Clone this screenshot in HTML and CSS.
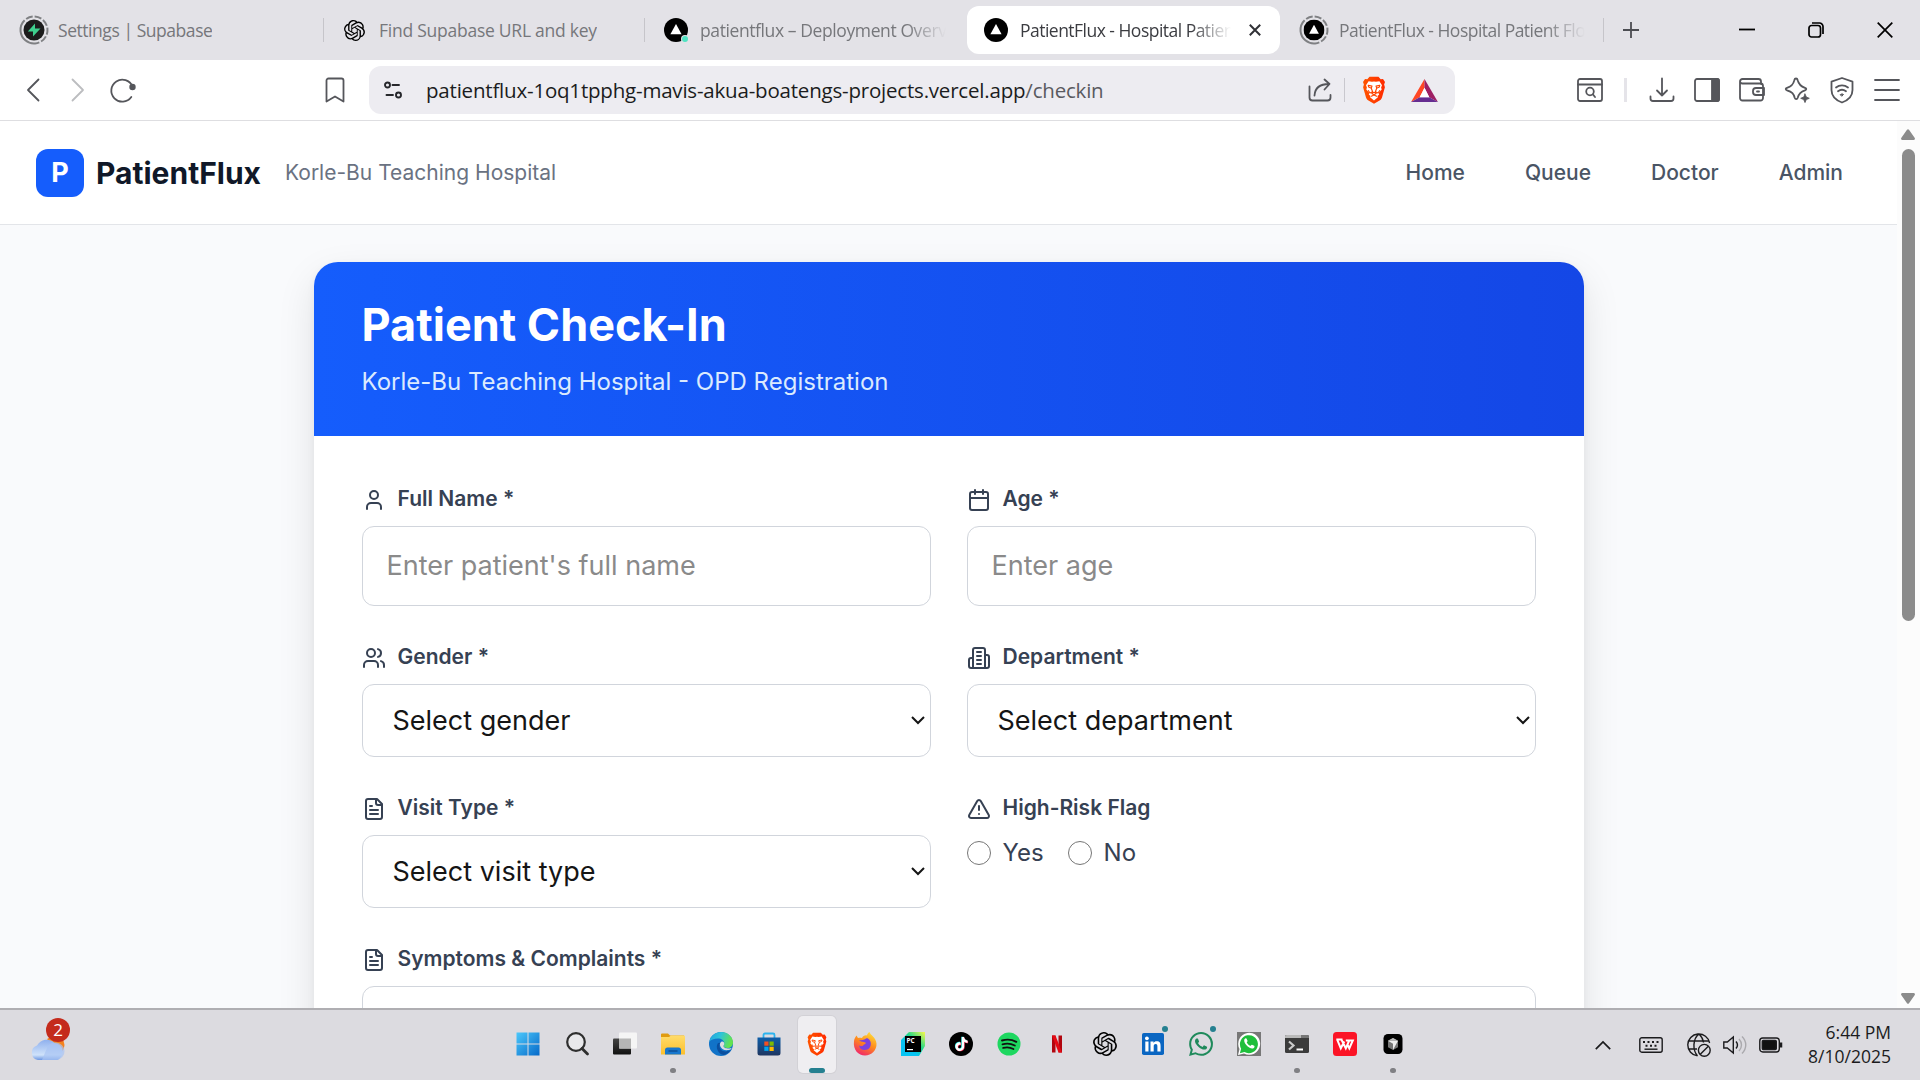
FILE: index.html
```html
<!DOCTYPE html>
<html lang="en">
<head>
<meta charset="utf-8">
<title>PatientFlux - Hospital Patient Flow</title>
<link rel="stylesheet" href="styles.css">
</head>
<body>
<svg class="defs" width="0" height="0">
  <defs>
    <linearGradient id="g-brave" x1="0" y1="0" x2="1" y2="0"><stop offset="0" stop-color="#ff5500"/><stop offset="1" stop-color="#ff2a00"/></linearGradient>
    <linearGradient id="g-win" x1="0" y1="0" x2="1" y2="1"><stop offset="0" stop-color="#4cc8fb"/><stop offset="1" stop-color="#0669c9"/></linearGradient>
    <linearGradient id="g-folder" x1="0" y1="0" x2="0" y2="1"><stop offset="0" stop-color="#ffdc6b"/><stop offset="1" stop-color="#fcbf2c"/></linearGradient>
    <linearGradient id="g-edge" x1="0" y1="0" x2="1" y2="0.3"><stop offset="0" stop-color="#1e9fe0"/><stop offset="0.5" stop-color="#2fc4d8"/><stop offset="1" stop-color="#63e250"/></linearGradient>
    <linearGradient id="g-store" x1="0" y1="0" x2="0" y2="1"><stop offset="0" stop-color="#0d5ea9"/><stop offset="1" stop-color="#1f3560"/></linearGradient>
    <linearGradient id="g-fox" x1="0.8" y1="0" x2="0.3" y2="1"><stop offset="0" stop-color="#ffe13a"/><stop offset="0.5" stop-color="#ff8a1c"/><stop offset="1" stop-color="#f0246e"/></linearGradient>
    <linearGradient id="g-pc" x1="0" y1="1" x2="1" y2="0"><stop offset="0.35" stop-color="#07c3f2"/><stop offset="0.6" stop-color="#21d789"/><stop offset="1" stop-color="#fcf84a"/></linearGradient>
    <linearGradient id="g-cloud" x1="0" y1="0" x2="0" y2="1"><stop offset="0" stop-color="#8fb0ee"/><stop offset="0.75" stop-color="#cfe2fa"/><stop offset="1" stop-color="#6d97e2"/></linearGradient>
    <linearGradient id="g-task" x1="0" y1="0" x2="0" y2="1"><stop offset="0" stop-color="#444"/><stop offset="1" stop-color="#111"/></linearGradient>
  </defs>
  <symbol id="i-gpt" viewBox="0 0 24 24"><path d="M22.2819 9.8211a5.9847 5.9847 0 0 0-.5157-4.9108 6.0462 6.0462 0 0 0-6.5098-2.9A6.0651 6.0651 0 0 0 4.9807 4.1818a5.9847 5.9847 0 0 0-3.9977 2.9 6.0462 6.0462 0 0 0 .7427 7.0966 5.98 5.98 0 0 0 .511 4.9107 6.051 6.051 0 0 0 6.5146 2.9001A5.9847 5.9847 0 0 0 13.2599 24a6.0557 6.0557 0 0 0 5.7718-4.2058 5.9894 5.9894 0 0 0 3.9977-2.9001 6.0557 6.0557 0 0 0-.7475-7.0729zm-9.022 12.6081a4.4755 4.4755 0 0 1-2.8764-1.0408l.1419-.0804 4.7783-2.7582a.7948.7948 0 0 0 .3927-.6813v-6.7369l2.02 1.1686a.071.071 0 0 1 .038.052v5.5826a4.504 4.504 0 0 1-4.4945 4.4944zm-9.6607-4.1254a4.4708 4.4708 0 0 1-.5346-3.0137l.142.0852 4.783 2.7582a.7712.7712 0 0 0 .7806 0l5.8428-3.3685v2.3324a.0804.0804 0 0 1-.0332.0615L9.74 19.9502a4.4992 4.4992 0 0 1-6.1408-1.6464zM2.3408 7.8956a4.485 4.485 0 0 1 2.3655-1.9728V11.6a.7664.7664 0 0 0 .3879.6765l5.8144 3.3543-2.0201 1.1685a.0757.0757 0 0 1-.071 0l-4.8303-2.7865A4.504 4.504 0 0 1 2.3408 7.872zm16.5963 3.8558L13.1038 8.364 15.1192 7.2a.0757.0757 0 0 1 .071 0l4.8303 2.7913a4.4944 4.4944 0 0 1-.6765 8.1042v-5.6772a.79.79 0 0 0-.407-.667zm2.0107-3.0231l-.142-.0852-4.7735-2.7818a.7759.7759 0 0 0-.7854 0L9.409 9.2297V6.8974a.0662.0662 0 0 1 .0284-.0615l4.8303-2.7866a4.4992 4.4992 0 0 1 6.6802 4.66zM8.3065 12.863l-2.02-1.1638a.0804.0804 0 0 1-.038-.0567V6.0742a4.4992 4.4992 0 0 1 7.3757-3.4537l-.142.0805L8.704 5.459a.7948.7948 0 0 0-.3927.6813zm1.0976-2.3654l2.602-1.4998 2.6069 1.4998v2.9994l-2.5974 1.4997-2.6067-1.4997Z"/></symbol>
  <symbol id="i-vercel" viewBox="0 0 24 24"><circle cx="12" cy="12" r="12" fill="#000"/><path d="M12 6l5.6 10.2H6.400z" fill="#fff"/></symbol>
  <symbol id="i-brave" viewBox="0 0 24 28"><path d="M7.500.8h9l2.200 2.500 2.300-.4 2 3.200-.9 2.300.8 2.800-2.900 10.300c-.4 1.300-1 2-2 2.700l-6 3.600-6-3.600c-1-.7-1.600-1.400-2-2.700L1.100 11.200l.8-2.800L1 6.100l2-3.200 2.300.4z" fill="url(#g-brave)"/><path d="M12 5.400l2 .4 3.400-.6 2.600 4-.9 2.300.6 2-3.100 3.400.6 1.700-1.700 1.400 .4 1.300L12 24.400 8.100 21.300l.4-1.300-1.700-1.400.6-1.700L4.300 13.500l.6-2L4 9.200l2.600-4 3.400.6z" fill="#fff"/><path d="M6.200 9.300l3.800.8-.7 2.100L6.700 11zM17.800 9.300l-3.800.8.7 2.100 2.600-1.200zM9.300 12.200l1.300 3.500L8 17l-1.700-2.400M14.700 12.200l-1.300 3.500L16 17l1.700-2.400M12 16.200l2.200 1.300-2.200 1.400-2.200-1.400zM9.300 20.300L12 18.900l2.700 1.400" fill="none" stroke="#ff4500" stroke-width="1.100"/></symbol>
  <symbol id="i-file" viewBox="0 0 24 24"><path d="M15 2H6a2 2 0 0 0-2 2v16a2 2 0 0 0 2 2h12a2 2 0 0 0 2-2V7Z"/><path d="M14 2v4a2 2 0 0 0 2 2h4M10 9H8M16 13H8M16 17H8"/></symbol>
  <symbol id="i-wa" viewBox="0 0 24 24"><path d="M17.472 14.382c-.297-.149-1.758-.867-2.03-.967-.273-.099-.471-.148-.67.15-.197.297-.767.966-.94 1.164-.173.199-.347.223-.644.075-.297-.15-1.255-.463-2.39-1.475-.883-.788-1.480-1.761-1.653-2.059-.173-.297-.018-.458.13-.606.134-.133.298-.347.446-.52.149-.174.198-.298.298-.497.099-.198.05-.371-.025-.52-.075-.149-.669-1.612-.916-2.207-.242-.579-.487-.5-.669-.51-.173-.008-.371-.01-.57-.01-.198 0-.52.074-.792.372-.272.297-1.040 1.016-1.040 2.479 0 1.462 1.065 2.875 1.213 3.074.149.198 2.096 3.200 5.077 4.487.709.306 1.262.489 1.694.625.712.227 1.360.195 1.871.118.571-.085 1.758-.719 2.006-1.413.248-.694.248-1.289.173-1.413-.074-.124-.272-.198-.57-.347m-5.421 7.403h-.004a9.870 9.870 0 0 1-5.031-1.378l-.361-.214-3.741.982.998-3.648-.235-.374a9.860 9.860 0 0 1-1.510-5.260c.001-5.450 4.436-9.884 9.888-9.884 2.640 0 5.122 1.030 6.988 2.898a9.825 9.825 0 0 1 2.893 6.994c-.003 5.450-4.437 9.884-9.885 9.884m8.413-18.297A11.815 11.815 0 0 0 12.050 0C5.495 0 .16 5.335.157 11.892c0 2.096.547 4.142 1.588 5.945L.057 24l6.305-1.654a11.882 11.882 0 0 0 5.683 1.448h.005c6.554 0 11.890-5.335 11.893-11.893a11.821 11.821 0 0 0-3.480-8.413z"/></symbol>
  <symbol id="i-tok" viewBox="0 0 24 24"><path d="M12.525.02c1.310-.02 2.610-.01 3.910-.02.08 1.530.63 3.090 1.750 4.170 1.120 1.110 2.700 1.620 4.240 1.790v4.030c-1.440-.05-2.890-.35-4.200-.97-.57-.26-1.100-.59-1.620-.93-.01 2.920.01 5.840-.02 8.750-.08 1.400-.54 2.790-1.350 3.940-1.310 1.920-3.580 3.170-5.910 3.210-1.430.08-2.860-.31-4.080-1.030-2.020-1.190-3.440-3.370-3.650-5.710-.02-.5-.03-1-.01-1.490.18-1.900 1.120-3.720 2.580-4.960 1.660-1.440 3.980-2.130 6.150-1.720.02 1.480-.04 2.960-.04 4.440-.99-.32-2.150-.23-3.020.37-.63.41-1.110 1.040-1.360 1.750-.21.51-.15 1.070-.14 1.610.24 1.640 1.820 3.020 3.500 2.870 1.120-.01 2.190-.66 2.770-1.610.19-.33.4-.67.41-1.060.1-1.790.06-3.570.07-5.360.01-4.030-.01-8.050.02-12.070z"/></symbol>
</svg>

<div class="tabs">
  <div class="tab tab-1">
    <svg class="fav-lg" viewBox="0 0 30 30"><circle cx="15" cy="15" r="13.500" fill="none" stroke="#7f8083" stroke-width="2" stroke-dasharray="33 2 7 2 7 2 7 2 7 2 7 2" transform="rotate(85 15 15)"/><circle cx="15" cy="15" r="10.500" fill="#1c1c1c"/><path d="M16 8.500v5h5.500L14 21.500v-5H8.800z" fill="#3ecf8e"/></svg>
    <span class="tab-t t1">Settings | Supabase</span>
  </div>
  <i class="tab-div"></i>
  <div class="tab tab-2">
    <svg class="fav-sm"><use href="#i-gpt"/></svg>
    <span class="tab-t t2">Find Supabase URL and key</span>
  </div>
  <i class="tab-div"></i>
  <div class="tab tab-3">
    <svg class="fav" viewBox="0 0 24 24"><use href="#i-vercel"/><circle cx="21" cy="21" r="4" fill="#e3e2e7"/><circle cx="21" cy="21" r="3" fill="#50e3c2"/></svg>
    <span class="tab-t t3 fade">patientflux – Deployment Overview</span>
  </div>
  <div class="tab tab-4">
    <svg class="fav"><use href="#i-vercel"/></svg>
    <span class="tab-t t4 fade">PatientFlux - Hospital Patient Flow</span>
    <svg class="close" viewBox="0 0 12 12"><path d="M.8.8l10.400 10.400M11.200.8L.8 11.200" stroke="#303136" stroke-width="2"/></svg>
  </div>
  <div class="tab tab-5">
    <svg class="fav-lg" viewBox="0 0 30 30"><circle cx="15" cy="15" r="13.500" fill="none" stroke="#7f8083" stroke-width="2" stroke-dasharray="33 2 7 2 7 2 7 2 7 2 7 2" transform="rotate(85 15 15)"/><use href="#i-vercel" x="4.500" y="4.500" width="21" height="21"/></svg>
    <span class="tab-t t5 fade">PatientFlux - Hospital Patient Flow</span>
  </div>
  <i class="tab-div"></i>
  <svg class="plus" viewBox="0 0 16 16"><path d="M8 0v16M0 8h16" stroke="#4c4d52" stroke-width="1.800"/></svg>
  <div class="win">
    <svg viewBox="0 0 16 16"><path d="M0 7.500h16" stroke="#000" stroke-width="1.800"/></svg>
    <svg viewBox="0 0 16 16"><rect x="1" y="3.500" width="11.500" height="11.500" rx="2.500" fill="none" stroke="#000" stroke-width="1.700"/><path d="M4 1h7.500A3.500 3.500 0 0 1 15 4.500V12" fill="none" stroke="#000" stroke-width="1.700"/></svg>
    <svg viewBox="0 0 16 16"><path d="M.7.700l14.600 14.600M15.300.7L.7 15.300" stroke="#000" stroke-width="1.700"/></svg>
  </div>
</div>

<div class="toolbar">
  <div class="nav-btns">
    <svg viewBox="0 0 24 24"><path d="M17.500 1.500L7 12l10.500 10.500"/></svg>
    <svg class="dim" viewBox="0 0 24 24"><path d="M6.500 1.500L17 12 6.500 22.500"/></svg>
    <svg viewBox="0 0 24 24"><path d="M21.500 8.500A11 11 0 1 0 20.300 19"/><circle cx="21.500" cy="9" r="2.300" fill="#55565b"/></svg>
  </div>
  <svg class="bookmark" viewBox="0 0 20 26"><path d="M1.500 24.500V3.500a2 2 0 0 1 2-2h13a2 2 0 0 1 2 2v21L10 19.500z"/></svg>
  <div class="omni">
    <svg class="site" viewBox="0 0 18 18"><g fill="none" stroke="#26272b" stroke-width="1.900" stroke-linecap="round"><circle cx="3.500" cy="4" r="2.500"/><path d="M8.500 4H15M2.500 14H9"/><circle cx="14.500" cy="14" r="2.500"/></g></svg>
    <span class="url">patientflux-1oq1tpphg-mavis-akua-boatengs-projects.vercel.app<em>/checkin</em></span>
    <svg class="share" viewBox="0 0 24 24"><path d="M1.500 8.500v11a3 3 0 0 0 3 3h15a3 3 0 0 0 3-3v-2.500M6.500 17.500C7 9.500 13 6 21 6M16.500 1.500L21.500 6l-5 5.500"/></svg>
    <i class="omni-div"></i>
    <svg class="lion"><use href="#i-brave"/></svg>
    <svg class="bat" viewBox="0 0 28 24"><path d="M14 0L0 24l9-5 5-10z" fill="#ff4724"/><path d="M14 0l14 24-9-5-5-10z" fill="#9e1f63"/><path d="M0 24h28l-9-5H9z" fill="#662d91"/><path d="M14 9l5 10H9z" fill="#fff"/></svg>
  </div>
  <div class="actions">
    <svg viewBox="0 0 26 26"><rect x="1" y="2" width="24" height="22" rx="2"/><path d="M1 7.500h24"/><circle cx="13" cy="14.500" r="3.800"/><path d="M16 17.500l2 2.500"/></svg>
    <i class="act-div"></i>
    <svg viewBox="0 0 26 26"><path d="M13 1.500v17M8 13.500l5 5 5-5M1.500 19.500v2a2.500 2.500 0 0 0 2.500 2.500h18a2.500 2.500 0 0 0 2.500-2.500v-2"/></svg>
    <svg viewBox="0 0 26 26"><rect x="1" y="2" width="24" height="22" rx="2"/><path d="M18 2h5a2 2 0 0 1 2 2v18a2 2 0 0 1-2 2h-5z" fill="#55565b"/></svg>
    <svg viewBox="0 0 26 26"><path d="M22 7V4.500A2.500 2.500 0 0 0 19.500 2h-16A2.500 2.500 0 0 0 1 4.500V21a2.500 2.500 0 0 0 2.500 2.500h18A2.500 2.500 0 0 0 24 21V9a2.500 2.500 0 0 0-2.500-2.500H3.500a2.500 2.500 0 0 1-2.500-2M25 11h-8a3 3 0 0 0-3 3v1a3 3 0 0 0 3 3h8zM18 14.500h2"/></svg>
    <svg viewBox="0 0 26 26"><path d="M12 1.500c1 0 1.500.8 1.700 1.700 1 4 2.500 6 7.300 7.600 1.700.6 1.700 2 0 2.500-4.800 1.500-6.300 3.400-7.300 7.500-.5 1.800-2.400 1.800-3 0-1-4.100-2.500-6-7.700-7.500-1.700-.5-1.700-1.900 0-2.500 5-1.500 6.300-3.600 7.300-7.600.2-.9.700-1.700 1.700-1.700z"/><path d="M21 17l1.300 3 3 1.300-3 1.300-1.300 3-1.300-3-3-1.300 3-1.300z" fill="#55565b" stroke-width=".8"/></svg>
    <svg viewBox="0 0 26 26"><path d="M13 1l10.500 3.700v8.300c0 6.500-4.500 10.300-10.500 12.500C7 23.300 2.500 19.500 2.500 13V4.700z"/><path d="M7 10.500c3.500-2.800 8.500-2.800 12 0M9 14.300c2.500-2 5.500-2 8 0"/><path d="M11.500 17.500c1-.8 2-.8 3 0L13 19z" fill="#55565b" stroke-width="1"/></svg>
    <svg viewBox="0 0 26 26"><path d="M1 3h24M1 13h24M1 23h24"/></svg>
  </div>
</div>

<div class="viewport">
  <div class="page">
    <header class="site-head">
      <span class="logo">P</span>
      <span class="brand">PatientFlux</span>
      <span class="hospital">Korle-Bu Teaching Hospital</span>
      <nav><a>Home</a><a>Queue</a><a>Doctor</a><a>Admin</a></nav>
    </header>
    <main class="card">
      <div class="card-head">
        <h1>Patient Check-In</h1>
        <p>Korle-Bu Teaching Hospital - OPD Registration</p>
      </div>
      <form class="form">
        <div class="field">
          <div class="label"><svg viewBox="0 0 24 24"><path d="M19 21v-2a4 4 0 0 0-4-4H9a4 4 0 0 0-4 4v2"/><circle cx="12" cy="7" r="4"/></svg><span>Full Name *</span></div>
          <div class="box input">Enter patient's full name</div>
        </div>
        <div class="field">
          <div class="label"><svg viewBox="0 0 24 24"><path d="M8 2v4M16 2v4M3 10h18"/><rect x="3" y="4" width="18" height="18" rx="2"/></svg><span>Age *</span></div>
          <div class="box input">Enter age</div>
        </div>
        <div class="field">
          <div class="label"><svg viewBox="0 0 24 24"><path d="M16 21v-2a4 4 0 0 0-4-4H6a4 4 0 0 0-4 4v2"/><circle cx="9" cy="7" r="4"/><path d="M22 21v-2a4 4 0 0 0-3-3.870M16 3.130a4 4 0 0 1 0 7.750"/></svg><span>Gender *</span></div>
          <div class="box select"><span>Select gender</span><svg viewBox="0 0 14 9"><path d="M1 1l6 6 6-6"/></svg></div>
        </div>
        <div class="field">
          <div class="label"><svg viewBox="0 0 24 24"><path d="M6 22V4a2 2 0 0 1 2-2h8a2 2 0 0 1 2 2v18ZM6 12H4a2 2 0 0 0-2 2v6a2 2 0 0 0 2 2h2M18 9h2a2 2 0 0 1 2 2v9a2 2 0 0 1-2 2h-2M10 6h4M10 10h4M10 14h4M10 18h4"/></svg><span>Department *</span></div>
          <div class="box select"><span>Select department</span><svg viewBox="0 0 14 9"><path d="M1 1l6 6 6-6"/></svg></div>
        </div>
        <div class="field">
          <div class="label"><svg><use href="#i-file"/></svg><span>Visit Type *</span></div>
          <div class="box select"><span>Select visit type</span><svg viewBox="0 0 14 9"><path d="M1 1l6 6 6-6"/></svg></div>
        </div>
        <div class="field">
          <div class="label"><svg viewBox="0 0 24 24"><path d="m21.730 18-8-14a2 2 0 0 0-3.480 0l-8 14A2 2 0 0 0 4 21h16a2 2 0 0 0 1.730-3M12 9v4M12 17h.01"/></svg><span>High-Risk Flag</span></div>
          <div class="radios"><i class="radio"></i><span>Yes</span><i class="radio second"></i><span>No</span></div>
        </div>
        <div class="field wide">
          <div class="label"><svg><use href="#i-file"/></svg><span>Symptoms &amp; Complaints *</span></div>
          <div class="box area"></div>
        </div>
      </form>
    </main>
  </div>
  <div class="scroll">
    <svg viewBox="0 0 14 11"><path d="M6 .8a1.300 1.300 0 0 1 2 0l5.600 8A1.300 1.300 0 0 1 12.600 11H1.400a1.300 1.300 0 0 1-1-2.200z"/></svg>
    <i class="thumb"></i>
    <svg class="down" viewBox="0 0 14 11"><path d="M6 10.200a1.300 1.300 0 0 0 2 0l5.600-8A1.300 1.300 0 0 0 12.600 0H1.400a1.300 1.300 0 0 0-1 2.200z"/></svg>
  </div>
</div>

<div class="taskbar">
  <div class="weather">
    <svg viewBox="0 0 36 25"><circle cx="25" cy="9" r="9.500" fill="#f4821f"/><path d="M8 24a7.500 7.500 0 0 1-1-14.500A11 11 0 0 1 24.500 7 8.800 8.800 0 0 1 27 24z" fill="url(#g-cloud)"/><path d="M17 12a9 9 0 0 1 9-5.500A8.800 8.800 0 0 1 27 24H12z" fill="#a9c5f3" opacity=".7"/></svg>
    <b class="badge">2</b>
  </div>
  <div class="apps">
    <div class="app"><svg class="start" viewBox="0 0 24 24"><path d="M.5.5h11v11H.5zM12.500.5h11v11h-11zM.5 12.500h11v11H.5zM12.500 12.500h11v11h-11z" fill="url(#g-win)"/></svg></div>
    <div class="app"><svg viewBox="0 0 24 24"><circle cx="11" cy="10" r="8.800" fill="#e8e8eb" stroke="#2e2e2e" stroke-width="2.200"/><path d="M17 16.500l5.500 5.500" stroke="#2e2e2e" stroke-width="2.800" stroke-linecap="round"/></svg></div>
    <div class="app"><svg viewBox="0 0 24 24"><rect x="0" y="6.500" width="18" height="16" rx="1" fill="url(#g-task)"/><rect x="6" y=".5" width="18" height="16" rx="1" fill="#f5f5f5"/><path d="M6 6.500h12v10H6z" fill="#b5b5b5"/></svg></div>
    <div class="app"><svg viewBox="0 0 24 24"><path d="M0 2.500a1 1 0 0 1 1-1h6l2 2h14v4H0z" fill="#e09b10"/><path d="M0 5h8l2-1.500h13a1 1 0 0 1 1 1v18H0z" fill="url(#g-folder)"/><path d="M4 22.500V18a2.500 2.500 0 0 1 2.500-2.500h11A2.500 2.500 0 0 1 20 18v4.500z" fill="#1777cd"/><path d="M7.500 19h9" stroke="#0b4a8f" stroke-width="1.300"/></svg><i class="dot"></i></div>
    <div class="app"><svg viewBox="0 0 24 24"><circle cx="12" cy="12" r="12" fill="#1173c8"/><path d="M.2 10C1.500 3.800 6.300 0 12 0c7 0 12 5 12 10.500 0 3.500-2.500 5.500-5.500 5.500-2.500 0-4-1-4-2s1-1 .8-3C15 8.500 12.500 6.500 9 6.500c-4 0-7.500 1.500-8.800 3.500z" fill="url(#g-edge)"/><path d="M9 11c-3 4 0 11.500 6 12a12 12 0 0 0 7-5c-6 3-12 1-11.500-5 .1-1 .5-1.800 1-2.200z" fill="#0b4f9f"/><path d="M15.300 11.500c-.2-2-1.800-2.500-3-1.800-1.500 1-1.800 3-.8 5 1 2.200 4 4 8 3.300 2-.4 3-1.200 3.500-2-1.500.6-8.500 1-8.500-2 0-.8.800-1 .8-2.500z" fill="#dcdbe0"/></svg></div>
    <div class="app"><svg viewBox="0 0 24 24"><path d="M6.500 6.500V3a1.500 1.500 0 0 1 1.500-1.500h8A1.500 1.500 0 0 1 17.500 3v3.500" fill="none" stroke="#2bb3ee" stroke-width="1.800"/><path d="M.5 5.500h23V21a2.500 2.500 0 0 1-2.500 2.500H3A2.500 2.500 0 0 1 .5 21z" fill="url(#g-store)"/><path d="M7.300 9.500h4.200v4.200H7.300z" fill="#f25022"/><path d="M12.500 9.500h4.200v4.200h-4.200z" fill="#7fba00"/><path d="M7.300 14.700h4.200v4.200H7.300z" fill="#00a4ef"/><path d="M12.500 14.700h4.200v4.200h-4.200z" fill="#ffb900"/></svg></div>
    <div class="app active"><svg><use href="#i-brave"/></svg><i class="pill"></i></div>
    <div class="app"><svg viewBox="0 0 24 24"><path d="M1 9c.4-2.500 1.300-4 2.500-5.500L5 6c1.500-.5 2.800-.5 4 0 1-2 3-3 5-2.500C14 2 15.500.5 16.500 0c.5 3 6.500 5 7 11.500C24 18 18.500 23.500 12 23.500S-.2 18 1 9z" fill="url(#g-fox)"/><path d="M6 8c3 1 6-.5 8-2 3.500 1.500 4.500 5 3.500 8s-3.500 4-6 4-5-1.500-5.500-4.500c1.500 1 3.500 1 4.500-.5 1-1 2-1 2.500-2-1.500-1.500-5-.5-7-3z" fill="#7a42e0"/></svg></div>
    <div class="app"><svg viewBox="0 0 24 24"><path d="M8 0h16v14l-6 10H0V8z" fill="url(#g-pc)"/><path d="M4 4h16v16H4z" fill="#000"/><text x="5.400" y="11.400" class="pc">PC</text><path d="M6 17h6v1.200H6z" fill="#fff"/></svg></div>
    <div class="app"><svg viewBox="0 0 24 24"><circle cx="12" cy="12" r="12" fill="#000"/><use href="#i-tok" x="5" y="4.500" width="14" height="14" fill="#25f4ee"/><use href="#i-tok" x="6" y="5.500" width="14" height="14" fill="#fe2c55"/><use href="#i-tok" x="5.500" y="5" width="14" height="14" fill="#fff"/></svg></div>
    <div class="app"><svg viewBox="0 0 24 24"><circle cx="12" cy="12" r="11.500" fill="#1ed760"/><path d="M5 8.500c5-1.500 10-1 14.300 1.300M5.500 12.300c4.500-1.300 8.500-.8 12.300 1.200M6.200 15.900c3.800-1 7-.6 10.200 1.100" fill="none" stroke="#111" stroke-width="1.900" stroke-linecap="round"/></svg></div>
    <div class="app"><svg viewBox="0 0 24 24"><path d="M7 3.500h3.500v17H7zM13.500 3.500H17v17h-3.500z" fill="#b1060f"/><path d="M7 3.500h3.500l6.500 17h-3.500z" fill="#e50914"/></svg></div>
    <div class="app"><svg><use href="#i-gpt"/></svg></div>
    <div class="app"><svg viewBox="0 0 24 24"><rect x="1" y="1" width="22" height="22" rx="1.800" fill="#0a66c2"/><path d="M4.300 9.500h3.200v10H4.300zM9.500 9.500h3v1.400c.6-1 1.700-1.700 3.200-1.700 3.200 0 3.900 2 3.900 4.800v5.500h-3.200v-5c0-1.300-.2-2.500-1.700-2.500-1.600 0-2 1.200-2 2.500v5H9.500z" fill="#fff"/><circle cx="5.900" cy="6.300" r="1.900" fill="#fff"/></svg><i class="note"></i></div>
    <div class="app"><svg fill="#1f8a5b"><use href="#i-wa"/></svg><i class="note"></i></div>
    <div class="app"><svg viewBox="0 0 24 24"><path d="M0 0h24v24H0z" fill="#777"/><path d="M1 23l1.500-6A11 11 0 1 1 7 21.500z" fill="#fff"/><path d="M2.900 21.200l1.200-4.500a9 9 0 1 1 3.300 3.300z" fill="#1fbf3c"/><path d="M8.500 6.300c-2 1-1.500 4 .8 6.700s5.200 4.200 7.200 3.200c1.500-1 1-2.300.7-2.500l-2.200-1c-.8-.2-1 1.200-1.800 1-1.500-.6-2.700-1.700-3.400-3.200 0-.6 1-.9.700-1.700l-1-2.200z" fill="#fff"/></svg></div>
    <div class="app"><svg viewBox="0 0 24 24"><rect x="0" y="3" width="24" height="18" rx="1.500" fill="#3b3b3b"/><path d="M0 6V4.500A1.500 1.500 0 0 1 1.500 3H16v3z" fill="#b9b9b9"/><path d="M16 3h6.500A1.500 1.500 0 0 1 24 4.500V6h-8z" fill="#777"/><path d="M4 9.500l4.500 4L4 17.500" fill="none" stroke="#ccc" stroke-width="2.200"/><path d="M11.500 17.500h6.500" stroke="#fff" stroke-width="2"/></svg><i class="dot"></i></div>
    <div class="app"><svg viewBox="0 0 24 24"><rect width="24" height="24" rx="3.500" fill="#fb1426"/><path d="M3.300 7.600h6.200M4.300 7.800L7.800 16.300 11.300 9.500M8.500 7.800L12.800 16.300 16 9M12.800 8.400h7L16.300 16.300l-2-4" fill="none" stroke="#fff" stroke-width="2"/></svg></div>
    <div class="app"><svg viewBox="0 0 24 24"><rect x="2.500" y="2" width="19" height="20" rx="4.500" fill="#000"/><path d="M12 6l5 2.800v6.400L12 18l-5-2.800V8.800z" fill="#777"/><path d="M7 8.800h10L12 18v-6.300z" fill="#eee"/><path d="M12 6l5 2.800H7z" fill="#bbb"/></svg><i class="dot"></i></div>
  </div>
  <div class="tray">
    <svg class="chev" viewBox="0 0 16 9"><path d="M.8 8.200L8 1l7.200 7.200" stroke-width="1.700"/></svg>
    <svg class="kbd" viewBox="0 0 24 16"><rect x=".8" y=".8" width="22.400" height="14.400" rx="2"/><path d="M4 5h2M8.500 5h2M13 5h2M17.500 5h2M6.500 8.700h2M11 8.700h2M15.500 8.700h2" stroke-width="1.900"/><path d="M5.500 12.200h13"/></svg>
    <svg class="globe" viewBox="0 0 24 24"><path d="M22.600 10A11 11 0 1 0 10.500 22.900M1.600 8h20.500M1.600 16H10M12 1C5.500 6 5.500 17 10.500 22.900M12 1c2.500 2.300 4 5.300 4.500 8.500"/><circle cx="17.300" cy="17.300" r="5.900"/><path d="M13.300 21.300l8-8"/></svg>
    <svg class="spk" viewBox="0 0 24 20"><path d="M.8 7v6h3.500l6 5V2l-6 5zM13 6.500c1.700 2 1.700 5 0 7"/><path d="M16 4c3.300 3.500 3.300 8.500 0 12M19 1.500c5 5 5 12 0 17" stroke="#aaa9ad"/></svg>
    <svg class="batt" viewBox="0 0 24 16"><rect x=".8" y="1" width="19.500" height="14" rx="3"/><rect x="3.300" y="3.500" width="14" height="9" rx="1" fill="#111"/><path d="M22 5.500v5" stroke-width="2.500"/></svg>
    <div class="clock"><span>6:44 PM</span><span>8/10/2025</span></div>
  </div>
</div>
</body>
</html>
```
FILE: styles.css
```css
* { box-sizing: border-box; }
body { margin: 0; width: 1920px; height: 1080px; overflow: hidden; display: flex; flex-direction: column; font-family: Inter, sans-serif; background: #fff; }
svg { display: block; flex: none; overflow: visible; }
i { display: block; flex: none; font-style: normal; }
.defs { position: absolute; }

/* browser tabs */
.tabs { height: 60px; flex: none; background: #e3e2e7; display: flex; align-items: center; font-family: "Open Sans", "Noto Sans", sans-serif; font-size: 17.500px; color: #76777b; }
.tab { display: flex; align-items: center; height: 48px; }
.tab-t { white-space: nowrap; overflow: hidden; line-height: 30px; padding-bottom: 1px; letter-spacing: -.52px; }
.tab-div { width: 1px; height: 24px; background: #c6c5ca; }
.fav { width: 24px; height: 24px; }
.fav-sm { width: 21px; height: 21px; }
.fav-lg { width: 30px; height: 30px; }
.tab-1 { width: 323px; padding-left: 19px; gap: 9px; }
.tab-2 { width: 320px; padding-left: 20px; gap: 14px; }
.tab-3 { width: 322px; padding-left: 19px; gap: 12px; }
.tab-4 { width: 313px; padding-left: 17px; gap: 12px; background: #fff; border-radius: 12px; color: #3b3c41; }
.tab-5 { width: 323px; padding-left: 19px; gap: 10px; }
.t1 { letter-spacing: -.45px; }
.t2 { letter-spacing: -.25px; }
.t3 { width: 246px; letter-spacing: -.4px; }
.t4 { width: 211px; }
.t5 { width: 246px; }
.fade { -webkit-mask-image: linear-gradient(90deg, #000 calc(100% - 40px), transparent); mask-image: linear-gradient(90deg, #000 calc(100% - 40px), transparent); }
.close { width: 12px; height: 12px; margin-left: 6px; }
.plus { width: 16px; height: 16px; margin-left: 19px; }
.win { display: flex; gap: 53px; margin-left: auto; margin-right: 27px; }
.win svg { width: 16px; height: 16px; }

/* address bar */
.toolbar { height: 61px; flex: none; border-bottom: 1px solid #dedee1; display: flex; align-items: center; background: #fff; }
.toolbar svg { fill: none; stroke: #55565b; stroke-width: 1.800; stroke-linejoin: round; stroke-linecap: round; }
.nav-btns { display: flex; gap: 21px; padding-left: 21px; }
.nav-btns svg { width: 24px; height: 24px; }
.nav-btns .dim { stroke: #bcbdc0; }
.bookmark { width: 20px; height: 26px; margin-left: 190px; }
.omni { display: flex; align-items: center; width: 1086px; height: 48px; margin-left: 24px; padding-left: 15px; background: #edecf1; border-radius: 12px; font-family: "Open Sans", "Noto Sans", sans-serif; }
.site { width: 18px; height: 18px; }
.url { margin-left: 24px; width: 699px; font-size: 20.500px; letter-spacing: -.2px; color: #1b1c20; white-space: nowrap; }
.url em { font-style: normal; color: #595a5f; }
.share { width: 24px; height: 24px; margin-left: 183px; }
.omni-div { width: 1px; height: 24px; margin-left: 12px; background: #c9c8ce; }
.toolbar .lion { width: 24px; height: 28px; margin-left: 17px; stroke: none; }
.toolbar .bat { width: 27px; height: 23px; margin-left: 25px; stroke: none; }
.actions { display: flex; align-items: center; gap: 19px; margin-left: auto; margin-right: 20px; }
.actions svg { width: 26px; height: 26px; }
.act-div { width: 3px; height: 24px; margin: 0 3px 0 2px; background: #e5e4e9; }

/* page */
.viewport { flex: 1; min-height: 0; display: flex; overflow: hidden; }
.page { width: 1897px; overflow: hidden; background: #f9fafc; }
.site-head { height: 104px; display: flex; align-items: center; padding: 0 36px; background: #fff; border-bottom: 1px solid #e3e5e9; }
.logo { width: 48px; height: 48px; border-radius: 12px; background: #155dfc; color: #fff; font-size: 27px; font-weight: 700; display: grid; place-items: center; }
.brand { margin-left: 12px; font-size: 30px; font-weight: 700; color: #101828; }
.hospital { margin-left: 24px; font-size: 21px; color: #6a7282; }
.site-head nav { margin-left: auto; display: flex; gap: 60px; padding-right: 18px; font-size: 21px; font-weight: 500; color: #4a5565; }
.card { width: 1270px; height: 900px; margin: 37px auto 0; background: #fff; border-radius: 24px; box-shadow: 0 15px 38px rgba(0,0,0,.1), 0 3px 9px rgba(0,0,0,.05); }
.card-head { height: 174px; padding: 36px 48px; border-radius: 24px 24px 0 0; background: linear-gradient(90deg, #155dfc, #1447e6); color: #fff; }
.card-head h1 { margin: 0 0 12px; font-size: 45px; line-height: 54px; font-weight: 700; }
.card-head p { margin: 0; font-size: 24px; line-height: 36px; color: #dbeafe; }
.form { padding: 48px; display: grid; grid-template-columns: 569px 569px; gap: 36px; }
.wide { grid-column: span 2; }
.label { height: 30px; margin-bottom: 12px; display: flex; align-items: center; gap: 12px; font-size: 21px; font-weight: 600; color: #364153; }
.label svg { width: 24px; height: 24px; margin-top: 1px; fill: none; stroke: #364153; stroke-width: 2; stroke-linecap: round; stroke-linejoin: round; }
.label span { padding-bottom: 2px; }
.box { border: 1px solid #d1d5dc; border-radius: 12px; font-size: 27px; display: flex; align-items: center; }
.input { height: 80px; padding: 0 0 2px 24px; color: #8a8a8a; }
.select { height: 73px; padding: 0 5px 0 30px; justify-content: space-between; color: #151515; }
.select svg { width: 14px; height: 9px; fill: none; stroke: #151515; stroke-width: 2; }
.area { height: 150px; }
.radios { display: flex; align-items: center; height: 36px; font-size: 24px; color: #364153; }
.radios span { padding-bottom: 2px; }
.radio { width: 24px; height: 24px; border: 1.500px solid #767676; border-radius: 50%; margin-right: 12px; }
.second { margin-left: 24px; }
.scroll { width: 23px; background: #fcfcfc; display: flex; flex-direction: column; align-items: center; padding: 8px 1px 4px 0; }
.scroll svg { width: 14px; height: 11px; fill: #8b8b8b; }
.thumb { width: 13px; height: 472px; margin-top: 9px; background: #8b8b8b; border-radius: 7px; }
.scroll .down { margin-top: auto; }

/* desktop taskbar */
.taskbar { height: 72px; flex: none; border-top: 2px solid #afaeb2; background: #dcdbe0; display: flex; align-items: center; }
.weather { position: relative; width: 505px; height: 70px; padding: 26px 0 0 30px; }
.weather svg { width: 36px; height: 25px; }
.badge { position: absolute; left: 46px; top: 8px; width: 24px; height: 24px; border-radius: 50%; background: #c42b1c; color: #fff; font: 17px/24px "Open Sans", sans-serif; text-align: center; }
.apps { display: flex; }
.app { position: relative; width: 48px; height: 70px; padding: 22px 12px; }
.app svg { width: 24px; height: 24px; }
.app .start { margin-left: -1px; }
.active::before { content: ""; position: absolute; left: 5px; top: 6px; width: 38px; height: 57px; background: #efeef1; border-radius: 5px; box-shadow: 0 0 0 1px #d2d1d6; }
.active svg { position: relative; }
.dot { position: absolute; left: 21px; top: 58px; width: 6px; height: 5px; border-radius: 3px; background: #808084; }
.pill { position: absolute; left: 16px; top: 58px; width: 16px; height: 5px; border-radius: 3px; background: #258090; }
.note { position: absolute; left: 33px; top: 16px; width: 6px; height: 6px; border-radius: 50%; background: #258090; }
.pc { font: 700 6.500px "Open Sans", sans-serif; fill: #fff; }
.tray { flex: 1; display: flex; align-items: center; padding-left: 178px; }
.tray svg { fill: none; stroke: #1b1b1d; stroke-width: 1.400; }
.chev { width: 16px; height: 9px; margin-right: 28px; }
.kbd { width: 24px; height: 16px; margin-right: 24px; }
.globe { width: 24px; height: 24px; margin-right: 12px; }
.spk { width: 24px; height: 20px; margin-right: 12px; }
.batt { width: 24px; height: 16px; }
.clock { margin-left: auto; margin-right: 29px; padding-bottom: 3px; display: flex; flex-direction: column; align-items: flex-end; font: 17.500px/24px "Open Sans", "Noto Sans", sans-serif; letter-spacing: 0; color: #1b1b1d; }
```
